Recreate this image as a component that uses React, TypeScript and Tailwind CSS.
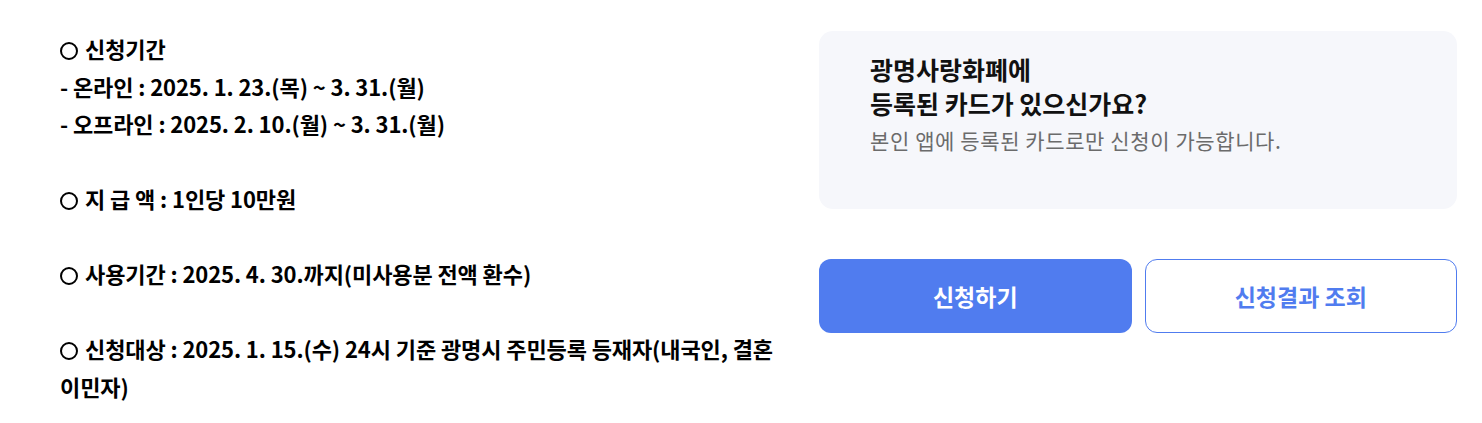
import React from 'react';

type Line = { circle?: boolean; text: string };

const lines: Line[] = [
  { circle: true, text: '신청기간' },
  { text: '- 온라인 : 2025. 1. 23.(목) ~ 3. 31.(월)' },
  { text: '- 오프라인 : 2025. 2. 10.(월) ~ 3. 31.(월)' },
  { text: '' },
  { circle: true, text: '지 급 액 : 1인당 10만원' },
  { text: '' },
  { circle: true, text: '사용기간 : 2025. 4. 30.까지(미사용분 전액 환수)' },
  { text: '' },
  { circle: true, text: '신청대상 : 2025. 1. 15.(수) 24시 기준 광명시 주민등록 등재자(내국인, 결혼 이민자)' },
];

const Circle = () => (
  <span className="inline-block w-[18px] h-[18px] rounded-full border-[2px] border-black align-[-2px] mr-[7px]" />
);

const App: React.FC = () => {
  return (
    <div className="min-h-screen bg-white font-['Noto_Sans_CJK_KR','Noto_Sans',sans-serif] text-black">
      <div className="flex pt-[30px] pl-[60px] pr-[25px]">
        {/* 안내 문구 */}
        <div className="w-[735px] shrink-0 text-[22px] leading-[37.5px] font-bold tracking-[-0.1px] break-keep">
          {lines.map((line, i) =>
            line.text ? (
              <p key={i}>
                {line.circle && <Circle />}
                {line.text}
              </p>
            ) : (
              <p key={i} className="h-[37.5px]" />
            )
          )}
        </div>

        <div className="ml-[24px] flex-1 flex flex-col">
          <div className="h-[178px] rounded-[14px] bg-[#f6f7fb] pl-[51px] pt-[21px] mt-[1px] break-keep">
            <h2 className="text-[25px] leading-[34px] font-bold text-[#111]">
              광명사랑화폐에
              <br />
              등록된 카드가 있으신가요?
            </h2>
            <p className="mt-[5px] text-[21px] leading-[30px] text-[#6b6b6b] tracking-[0.6px]">
              본인 앱에 등록된 카드로만 신청이 가능합니다.
            </p>
          </div>

          <div className="mt-[50px] grid grid-cols-2 gap-[13px]">
            <button className="h-[74px] rounded-[12px] bg-[#507cef] text-white text-[23px] font-bold">
              신청하기
            </button>
            <button className="h-[74px] rounded-[12px] border border-[#507cef] bg-white text-[#507cef] text-[23px] font-bold">
              신청결과 조회
            </button>
          </div>
        </div>
      </div>
    </div>
  );
};

export default App;
